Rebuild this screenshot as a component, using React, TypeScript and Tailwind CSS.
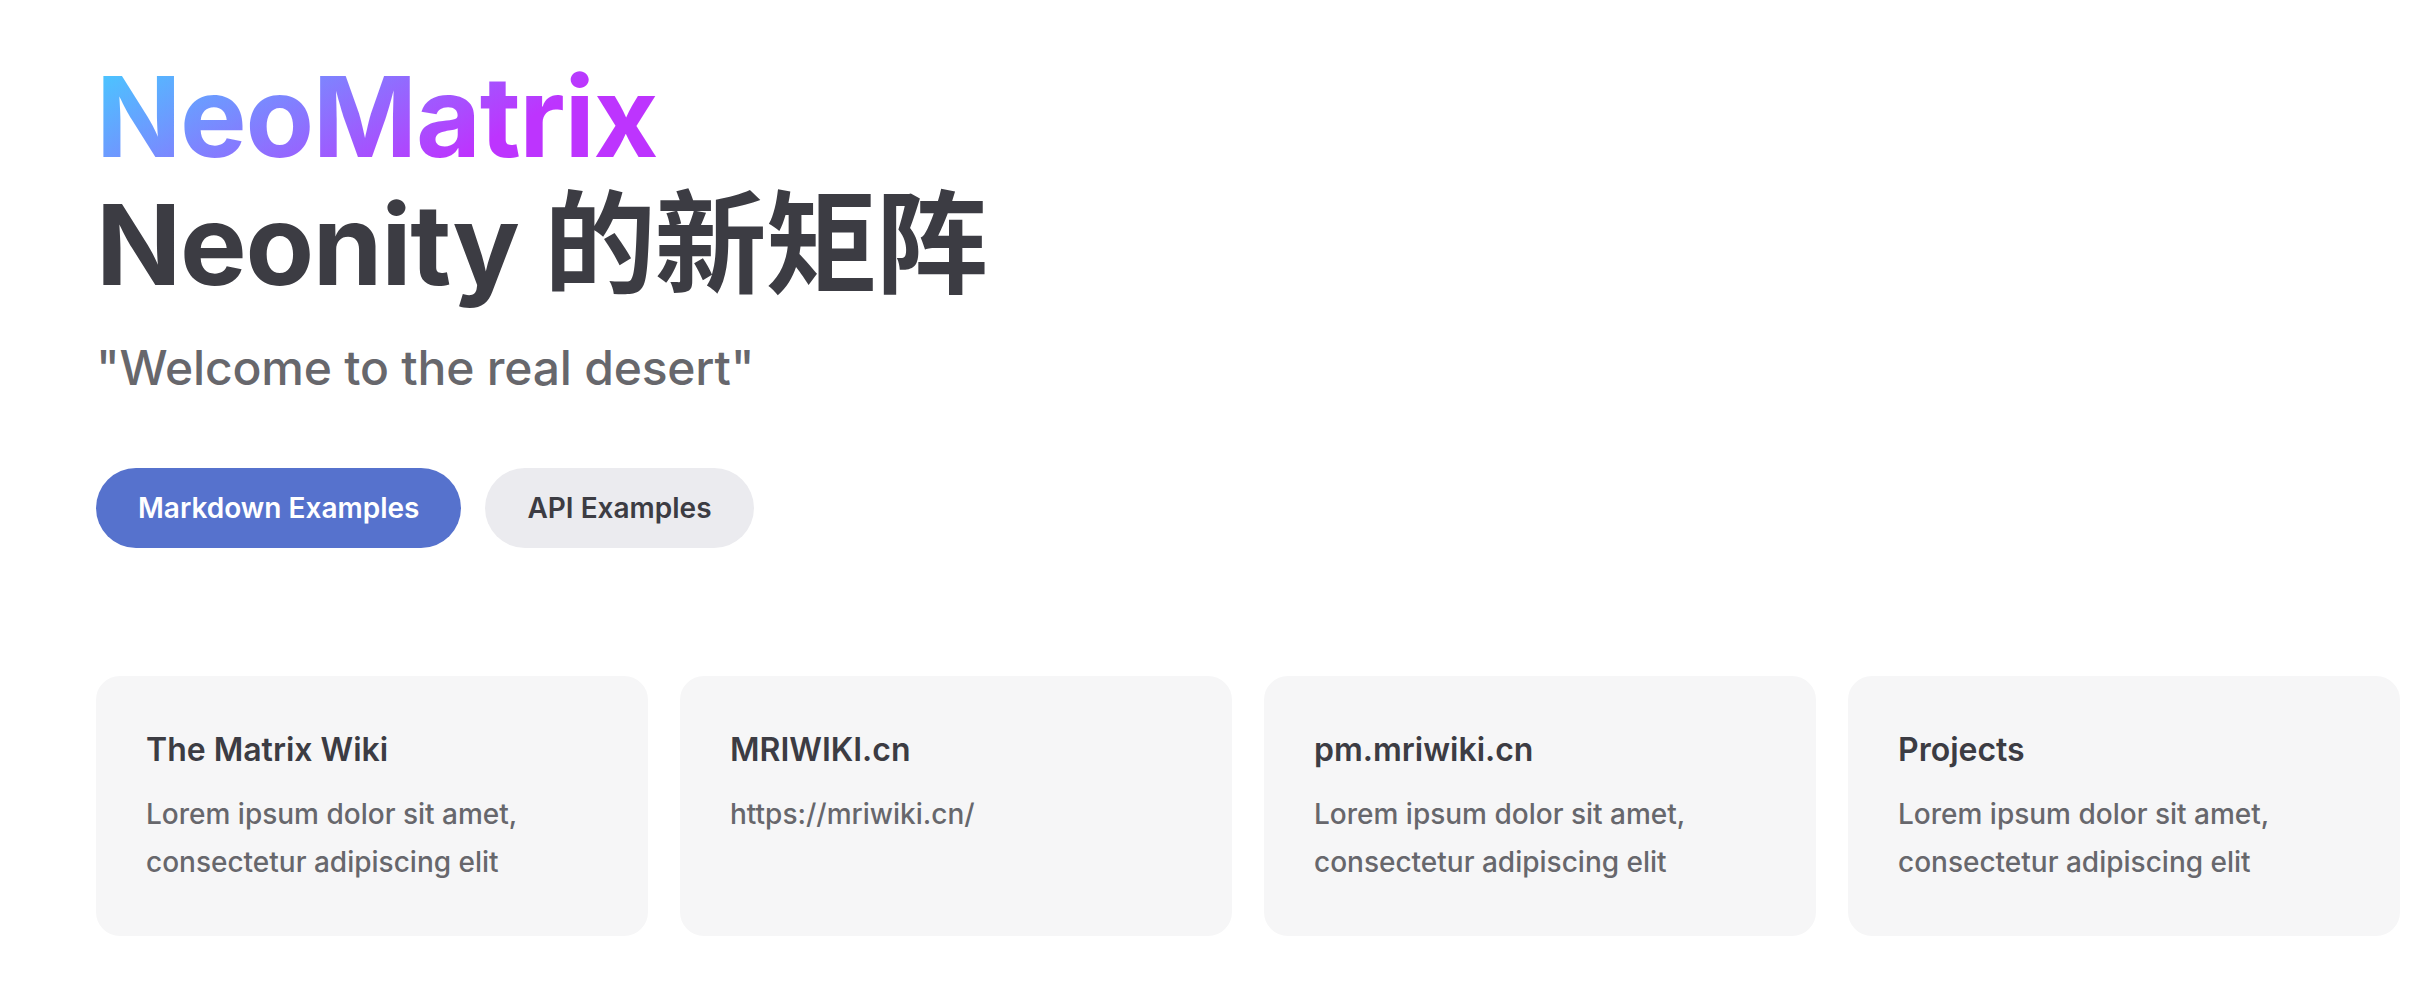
const features = [
  {
    title: "The Matrix Wiki",
    details: "Lorem ipsum dolor sit amet, consectetur adipiscing elit",
  },
  { title: "MRIWIKI.cn", details: "https://mriwiki.cn/" },
  {
    title: "pm.mriwiki.cn",
    details: "Lorem ipsum dolor sit amet, consectetur adipiscing elit",
  },
  {
    title: "Projects",
    details: "Lorem ipsum dolor sit amet, consectetur adipiscing elit",
  },
];

export default function App() {
  return (
    <div
      className="min-h-[990px] bg-white pl-[96px] pr-[20px] pt-[52px] text-[#3c3c43]"
      style={{ fontFamily: 'Inter, "Noto Sans CJK SC", sans-serif' }}
    >
      {/* Hero */}
      <div>
        <h1 className="text-[112px] font-bold leading-[128px] tracking-[-1.3px]">
          <span className="inline-block bg-[linear-gradient(330deg,#bd34fe_30%,#41d1ff)] bg-clip-text text-transparent">
            NeoMatrix
          </span>
        </h1>
        <p className="text-[112px] font-bold leading-[128px] tracking-[-1.3px] text-[#3c3c43]">
          Neonity 的新矩阵
        </p>
        <p className="pt-[24px] text-[48px] font-medium leading-[72px] tracking-[-0.2px] text-[#67676c]">
          "Welcome to the real desert"
        </p>

        {/* Actions */}
        <div className="flex gap-[24px] pt-[64px]">
          <a className="inline-block rounded-[40px] border-2 border-transparent bg-[#5672cd] px-[40px] text-[28px] font-semibold leading-[76px] text-white">
            Markdown Examples
          </a>
          <a className="inline-block rounded-[40px] border-2 border-transparent bg-[#ebebef] px-[40px] text-[28px] font-semibold leading-[76px] text-[#3c3c43]">
            API Examples
          </a>
        </div>
      </div>

      {/* Features */}
      <div className="mt-[128px] grid w-[2304px] grid-cols-4 gap-[32px]">
        {features.map((f) => (
          <div
            key={f.title}
            className="rounded-[24px] border-2 border-[#f6f6f7] bg-[#f6f6f7] p-[48px]"
          >
            <h2 className="text-[32px] font-semibold leading-[48px] text-[#3c3c43]">
              {f.title}
            </h2>
            <p className="pt-[16px] text-[28px] font-medium leading-[48px] text-[#67676c]">
              {f.details}
            </p>
          </div>
        ))}
      </div>
    </div>
  );
}
